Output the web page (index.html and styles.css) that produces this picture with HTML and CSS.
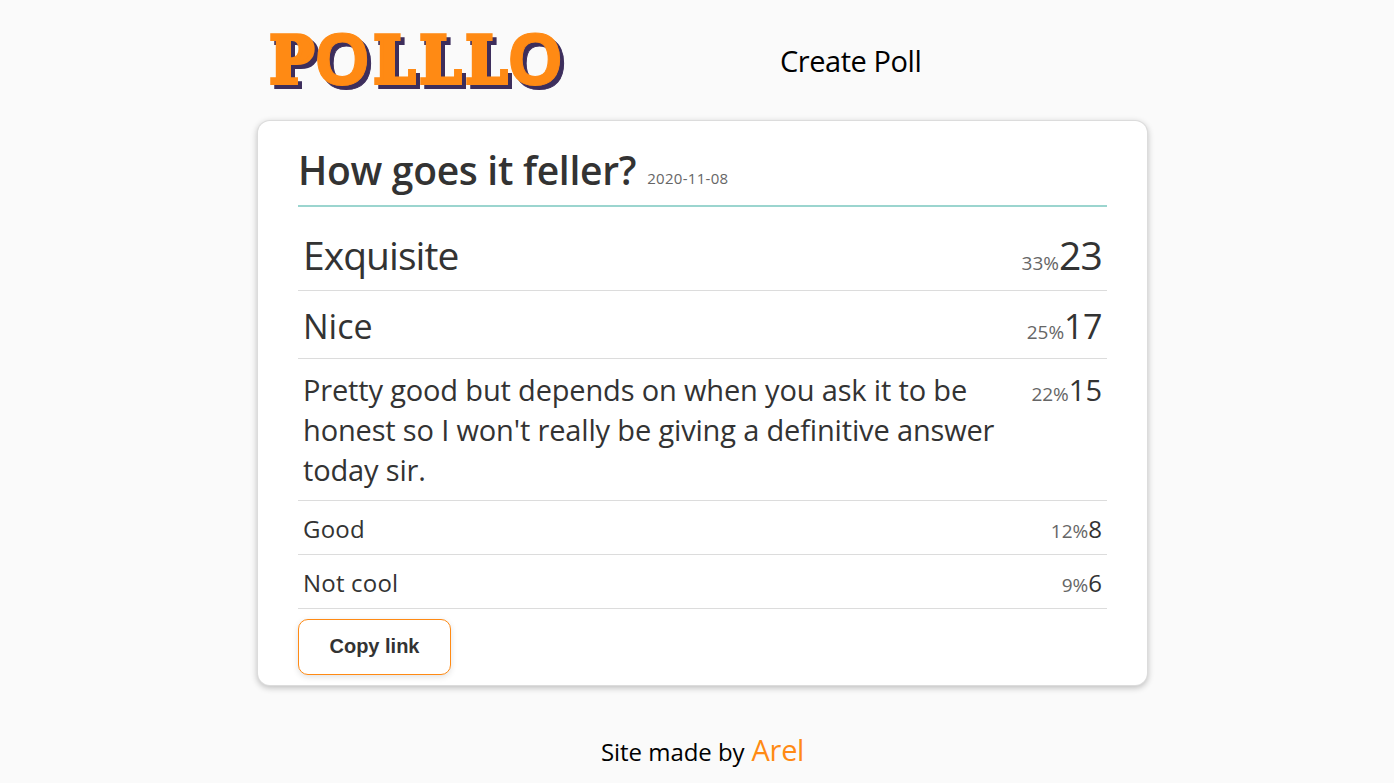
FILE: index.html
```html
<!DOCTYPE html>
<html lang="en">
<head>
<meta charset="utf-8">
<title>Polllo</title>
<link rel="stylesheet" href="styles.css">
</head>
<body>
<header class="top">
  <a class="logo"><svg width="310" height="76" role="img" aria-label="Polllo">
    <text x="1.500 45.500 105.500 151.500 197.500 238.500" y="63">P<tspan class="round" dy="1.500">O</tspan><tspan dy="-1.500">L</tspan>LL<tspan class="round" dy="1.500">O</tspan></text>
  </svg></a>
  <a class="create">Create Poll</a>
</header>
<main class="card">
  <div class="heading"><h1 class="title">How goes it feller?</h1><span class="date">2020-11-08</span></div>
  <ul class="results">
    <li class="row first"><span class="answer">Exquisite</span><span class="score"><span class="percent">33%</span><span class="votes">23</span></span></li>
    <li class="row second"><span class="answer">Nice</span><span class="score"><span class="percent">25%</span><span class="votes">17</span></span></li>
    <li class="row third"><span class="answer">Pretty good but depends on when you ask it to be honest so I won't really be giving a definitive answer today sir.</span><span class="score"><span class="percent">22%</span><span class="votes">15</span></span></li>
    <li class="row"><span class="answer">Good</span><span class="score"><span class="percent">12%</span><span class="votes">8</span></span></li>
    <li class="row"><span class="answer">Not cool</span><span class="score"><span class="percent">9%</span><span class="votes">6</span></span></li>
  </ul>
  <button class="copy">Copy link</button>
</main>
<footer class="footer"><span class="made">Site made by</span><a class="author">Arel</a></footer>
</body>
</html>
```
FILE: styles.css
```css
* { box-sizing: border-box; }
body { margin: 0; height: 783px; overflow: hidden; background: #fafafa; color: #000; font-family: "Open Sans", "Noto Sans", sans-serif; }
.top { display: flex; height: 121px; padding: 20px 0 0 268px; }
.logo { width: 512px; }
.logo svg { display: block; filter: drop-shadow(4px 4px 0 #3d2e5c); }
.logo text { font-family: "DejaVu Serif Condensed", "DejaVu Serif", serif; font-stretch: condensed; font-weight: 700; font-size: 66px; stroke-width: 4px; fill: #ff8a14; stroke: #ff8a14; }
.logo .round { font-family: "Open Sans", sans-serif; font-stretch: normal; font-size: 72px; stroke-width: 1px; }
.create { font-size: 29px; line-height: 40px; padding-top: 21px; letter-spacing: -0.45px; white-space: nowrap; }
.card { width: 889px; height: 564px; margin-left: 258px; padding: 0 40px; background: #fff; border-radius: 12px; box-shadow: 0 0 0 1px #dcdcdc, 0 2px 6px 1px rgba(0,0,0,.24); color: #333; }
.heading { display: flex; align-items: baseline; height: 86px; padding-top: 22px; border-bottom: 2px solid #9bd5cf; }
.title { margin: 0; font-size: 39px; line-height: 54px; font-weight: 600; letter-spacing: -0.3px; white-space: nowrap; }
.date { margin-left: 11px; font-size: 15px; letter-spacing: .3px; color: #666; position: relative; top: -1px; }
.results { list-style: none; margin: 0; padding: 0; }
.row { display: flex; justify-content: space-between; height: 54px; padding: 11px 5px 0; border-bottom: 1px solid #dcdcdc; font-size: 24px; line-height: 33px; align-items: baseline; }
.row .answer { letter-spacing: .2px; }
.first { height: 84px; padding-top: 21px; font-size: 39px; line-height: 53px; }
.first .answer { letter-spacing: -0.95px; }
.first .votes { letter-spacing: -0.8px; }
.second { height: 68px; padding-top: 12px; font-size: 34px; line-height: 47px; }
.second .answer { letter-spacing: 0; }
.second .votes { letter-spacing: -0.5px; }
.third { height: 142px; padding-top: 11px; font-size: 29px; line-height: 40px; }
.third .answer { letter-spacing: -0.16px; }
.answer { width: 700px; }
.score { white-space: nowrap; }
.percent { font-size: 19px; color: #666; }
.copy { display: block; width: 153px; height: 56px; margin-top: 10px; padding: 0 0 2px; border: 1px solid #ff8a14; border-radius: 10px; background: #fff; box-shadow: 0 2px 6px rgba(0,0,0,.12); color: #333; font: 700 20px "Liberation Sans", sans-serif; }
.footer { display: flex; align-items: baseline; padding: 45px 0 0 601px; line-height: 40px; white-space: nowrap; }
.made { font-size: 24px; letter-spacing: -0.05px; }
.author { margin-left: 7px; font-size: 29px; letter-spacing: -0.3px; color: #ff8a14; }
```
